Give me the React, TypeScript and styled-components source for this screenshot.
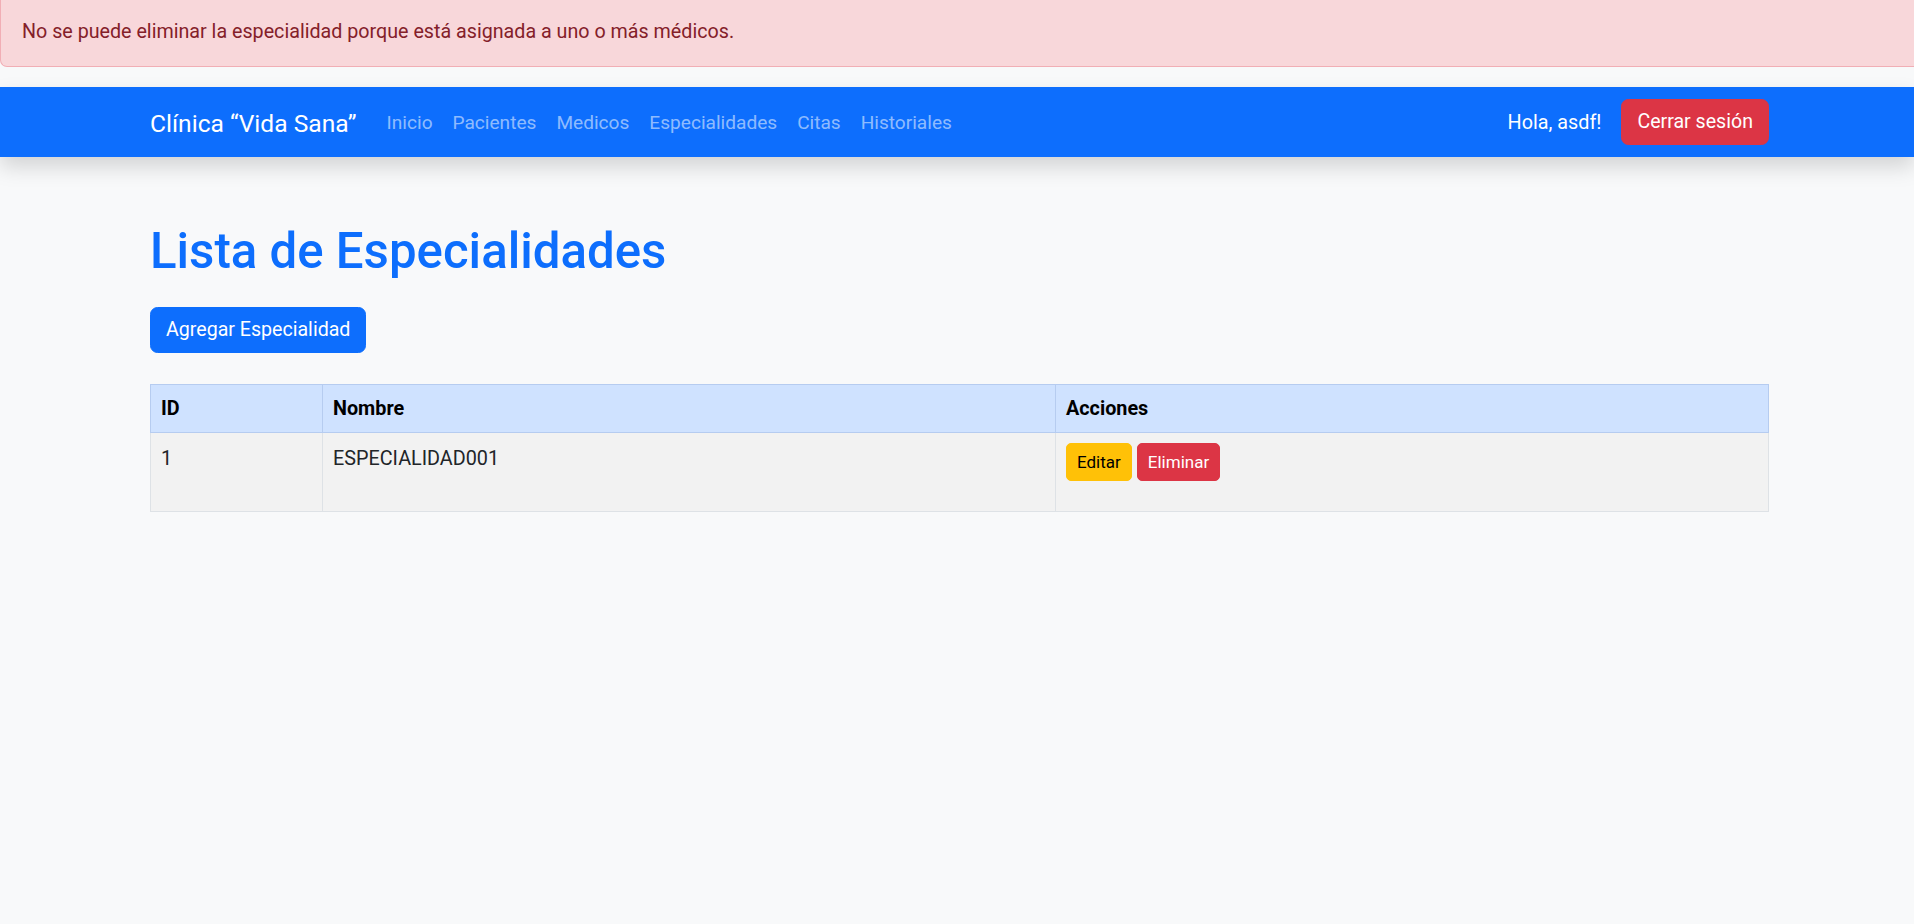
import React from "react";
import styled, { createGlobalStyle } from "styled-components";

const GlobalStyle = createGlobalStyle`
  * { box-sizing: border-box; }
  html, body { margin: 0; padding: 0; }
  body {
    background: #f8f9fa;
    font-family: Roboto, "Noto Sans", "Liberation Sans", sans-serif;
    font-size: 19.8px;
    line-height: 1.5;
    color: #212529;
    overflow-x: hidden;
  }
`;

const Alert = styled.div`
  background: #f8d7da;
  color: #842029;
  font-size: 19.7px;
  border-left: 1px solid #f1aeb5;
  border-bottom: 1px solid #f1aeb5;
  border-bottom-left-radius: 7px;
  padding: 17px 22px 19px 21px;
  line-height: 30px;
  margin-bottom: 20px;
`;

const Navbar = styled.nav`
  background: #0d6efd;
  height: 70px;
  box-shadow: 0 10px 20px rgba(0, 0, 0, 0.15);
`;

const Container = styled.div`
  width: 1619px;
  margin-left: 150px;
`;

const NavInner = styled(Container)`
  height: 100%;
  display: flex;
  align-items: center;
`;

const Brand = styled.a`
  color: #fff;
  font-size: 24.6px;
  line-height: 37px;
  margin-right: 20px;
  margin-top: 2px;
  text-decoration: none;
  white-space: nowrap;
`;

const NavList = styled.ul`
  display: flex;
  list-style: none;
  margin: 0;
  padding: 0;
  flex: 1;
`;

const NavLink = styled.a`
  display: block;
  padding: 11px 10px 9px;
  color: rgba(255, 255, 255, 0.55);
  font-size: 19.1px;
  text-decoration: none;
  line-height: 30px;
`;

const UserArea = styled.div`
  display: flex;
  align-items: center;
  gap: 20px;
`;

const Greeting = styled.span`
  color: #fff;
  margin-top: 2px;
`;

const Button = styled.button<{ $variant: "primary" | "danger" | "warning"; $size?: "sm" }>`
  font-family: inherit;
  border: 1px solid transparent;
  cursor: pointer;
  background: ${(p) =>
    p.$variant === "primary" ? "#0d6efd" : p.$variant === "danger" ? "#dc3545" : "#ffc107"};
  border-color: ${(p) =>
    p.$variant === "primary" ? "#0d6efd" : p.$variant === "danger" ? "#dc3545" : "#ffc107"};
  color: ${(p) => (p.$variant === "warning" ? "#000" : "#fff")};
  font-size: ${(p) => (p.$size === "sm" ? "17px" : "19.6px")};
  line-height: ${(p) => (p.$size === "sm" ? "26px" : "30px")};
  padding: ${(p) => (p.$size === "sm" ? "5px 10px" : "7px 15px")};
  border-radius: ${(p) => (p.$size === "sm" ? "5px" : "7.5px")};
`;

const Main = styled(Container)`
  padding-top: 64px;
`;

const Title = styled.h1`
  margin: 0 0 26px;
  color: #0d6efd;
  font-size: 49.2px;
  font-weight: 500;
  line-height: 60px;
`;

const Table = styled.table`
  width: 100%;
  margin-top: 31px;
  border-collapse: collapse;
`;

const HeadCell = styled.th<{ $w?: number }>`
  width: ${(p) => (p.$w ? `${p.$w}px` : "auto")};
  background: #cfe2ff;
  color: #000;
  text-align: left;
  font-weight: 700;
  padding: 9px 10px 8px;
  line-height: 30px;
  border: 1px solid #b6ccf0;
`;

const Cell = styled.td`
  background: #f2f2f2;
  padding: 11px 10px 9px;
  line-height: 30px;
  vertical-align: top;
  border: 1px solid #dee2e6;
  border-top-color: #b6ccf0;
`;

const Actions = styled.div`
  display: flex;
  gap: 5px;
  margin-top: -1px;
  padding-bottom: 21px;
`;

export default function App() {
  return (
    <>
      <GlobalStyle />
      <Alert>No se puede eliminar la especialidad porque está asignada a uno o más médicos.</Alert>
      <Navbar>
        <NavInner>
          <Brand href="#">Clínica “Vida Sana”</Brand>
          <NavList>
            {["Inicio", "Pacientes", "Medicos", "Especialidades", "Citas", "Historiales"].map((l) => (
              <li key={l}>
                <NavLink href="#">{l}</NavLink>
              </li>
            ))}
          </NavList>
          <UserArea>
            <Greeting>Hola, asdf!</Greeting>
            <Button $variant="danger">Cerrar sesión</Button>
          </UserArea>
        </NavInner>
      </Navbar>
      <Main>
        <Title>Lista de Especialidades</Title>
        <Button $variant="primary">Agregar Especialidad</Button>
        <Table>
          <thead>
            <tr>
              <HeadCell $w={172}>ID</HeadCell>
              <HeadCell $w={733}>Nombre</HeadCell>
              <HeadCell>Acciones</HeadCell>
            </tr>
          </thead>
          <tbody>
            <tr>
              <Cell>1</Cell>
              <Cell>ESPECIALIDAD001</Cell>
              <Cell>
                <Actions>
                  <Button $variant="warning" $size="sm">Editar</Button>
                  <Button $variant="danger" $size="sm">Eliminar</Button>
                </Actions>
              </Cell>
            </tr>
          </tbody>
        </Table>
      </Main>
    </>
  );
}
